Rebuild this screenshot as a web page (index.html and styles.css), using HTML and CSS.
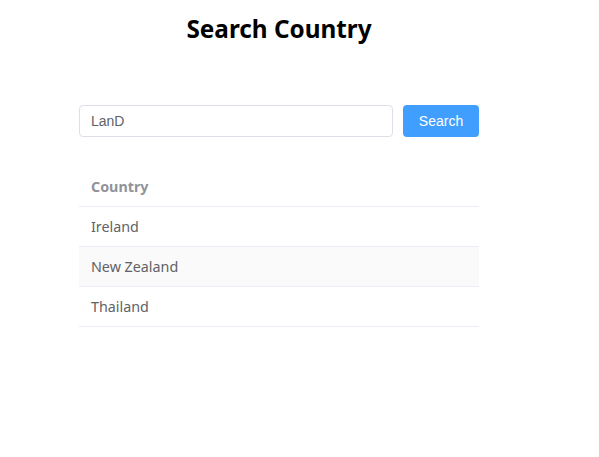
FILE: index.html
```html
<!DOCTYPE html>
<html>
<head>
<meta charset="utf-8">
<link rel="stylesheet" href="styles.css">
</head>
<body>
<div class="page">
  <h1 class="title">Search Country</h1>
  <div class="search">
    <input class="input" type="text" value="LanD">
    <button class="btn">Search</button>
  </div>
  <table class="table">
    <thead><tr><th>Country</th></tr></thead>
    <tbody>
      <tr><td>Ireland</td></tr>
      <tr class="stripe"><td>New Zealand</td></tr>
      <tr><td>Thailand</td></tr>
    </tbody>
  </table>
</div>
</body>
</html>
```
FILE: styles.css
```css
html, body { margin: 0; padding: 0; background: #fff; }
.page { width: 400px; margin-left: 79px; padding-top: 12px; font-family: "Noto Sans", sans-serif; }
.title { margin: 0; text-align: center; font-size: 24.3px; font-weight: 700; line-height: 34px; color: #000; }
.search { display: flex; gap: 10px; margin-top: 59px; }
.input { flex: 1; height: 32px; box-sizing: border-box; border: 1px solid #dcdfe6; border-radius: 4px; padding: 0 11px; font-family: "Liberation Sans", Arial, sans-serif; font-size: 14px; color: #606266; outline: none; }
.btn { width: 76px; height: 32px; border: none; border-radius: 4px; background: #409eff; color: #fff; font-family: "Liberation Sans", Arial, sans-serif; font-size: 14px; padding: 0; }
.table { width: 100%; border-collapse: collapse; margin-top: 29px; font-size: 14.3px; }
.table th, .table td { height: 40px; padding: 0 12px; text-align: left; border-bottom: 1px solid #ebeef5; box-sizing: border-box; }
.table th { color: #909399; font-weight: 700; padding-top: 1px; }
.table td { color: #606266; }
.stripe td { background: #fafafa; }
```
